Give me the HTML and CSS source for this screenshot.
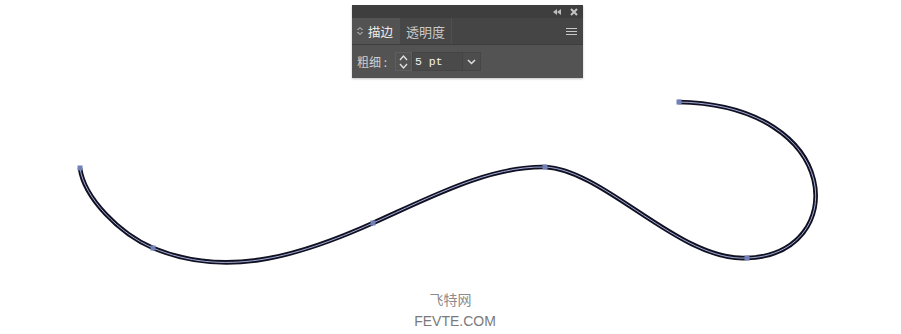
FILE: index.html
```html
<!DOCTYPE html>
<html>
<head>
<meta charset="utf-8">
<link rel="stylesheet" href="styles.css">
</head>
<body>
<div class="canvas">
  <svg class="art" width="901" height="334" viewBox="0 0 901 334">
    <path class="stroke-outer" d="M80,168 C84,198 120,234 153,248 C223,277 293,259 373,223 C433,196 490,166 545,167 C605,170 680,262 747,258 C850,255 845,105 678,102"/>
    <path class="stroke-inner" d="M80,168 C84,198 120,234 153,248 C223,277 293,259 373,223 C433,196 490,166 545,167 C605,170 680,262 747,258 C850,255 845,105 678,102"/>
    <g class="anchors">
      <rect x="77.5" y="165.5" width="5" height="5"/>
      <rect x="150.5" y="245.5" width="5" height="5"/>
      <rect x="370.5" y="220.5" width="5" height="5"/>
      <rect x="542.5" y="164.5" width="5" height="5"/>
      <rect x="744.5" y="255.5" width="5" height="5"/>
      <rect x="676.5" y="99.5" width="5" height="5"/>
    </g>
  </svg>

  <div class="panel">
    <div class="titlebar">
      <svg class="tb-icon" width="8" height="6" viewBox="0 0 8 6"><path d="M4 0 L0 3 L4 6 Z M8 0 L4 3 L8 6 Z" fill="#bdbdbd"/></svg>
      <svg class="tb-icon" width="8" height="8" viewBox="0 0 8 8"><path d="M1 1 L7 7 M7 1 L1 7" stroke="#c4c4c4" stroke-width="2"/></svg>
    </div>
    <div class="tabrow">
      <div class="tab active">
        <svg width="6" height="10" viewBox="0 0 6 10"><path d="M0.5 4 L3 1.5 L5.5 4 M0.5 6 L3 8.5 L5.5 6" fill="none" stroke="#d8d8d8" stroke-width="1"/></svg>
        <span>描边</span>
      </div>
      <div class="tab">透明度</div>
      <div class="tab-fill">
        <svg width="11" height="7" viewBox="0 0 11 7"><path d="M0 0.5 H11 M0 3.5 H11 M0 6.5 H11" stroke="#c8c8c8" stroke-width="1"/></svg>
      </div>
    </div>
    <div class="body">
      <span class="label">粗细 :</span>
      <div class="field">
        <div class="spin">
          <svg width="9" height="16" viewBox="0 0 9 16"><path d="M1 6 L4.5 2 L8 6 M1 10 L4.5 14 L8 10" fill="none" stroke="#e0e0e0" stroke-width="1.4"/></svg>
        </div>
        <div class="input">5 pt</div>
        <div class="drop">
          <svg width="9" height="6" viewBox="0 0 9 6"><path d="M1 1 L4.5 4.5 L8 1" fill="none" stroke="#e0e0e0" stroke-width="1.5"/></svg>
        </div>
      </div>
    </div>
  </div>

  <div class="watermark">
    <div class="wm-cn">飞特网</div>
    <div class="wm-en">FEVTE.COM</div>
  </div>
</div>
</body>
</html>
```

FILE: styles.css
```css
html, body {
  margin: 0;
  padding: 0;
  background: #ffffff;
}
.canvas {
  position: relative;
  width: 901px;
  height: 334px;
  overflow: hidden;
  background: #ffffff;
}
.art {
  position: absolute;
  left: 0;
  top: 0;
}
.stroke-outer {
  fill: none;
  stroke: #111122;
  stroke-width: 4.6;
  stroke-linecap: butt;
}
.stroke-inner {
  fill: none;
  stroke: #b4c0ee;
  stroke-width: 0.9;
}
.anchors rect {
  fill: #7181b8;
}
.panel {
  position: absolute;
  left: 352px;
  top: 5px;
  width: 231px;
  height: 73px;
  background: #535353;
  display: flex;
  flex-direction: column;
  box-shadow: 0 1px 2px rgba(0,0,0,0.25);
  font-family: "Noto Sans CJK SC", "Noto Sans", sans-serif;
}
.titlebar {
  height: 13px;
  background: #3e3e3e;
  display: flex;
  align-items: center;
  justify-content: flex-end;
  gap: 9px;
  padding-right: 5px;
}
.tabrow {
  height: 26px;
  display: flex;
  background: #454545;
  border-bottom: 1px solid #3d3d3d;
}
.tab {
  width: 52px;
  display: flex;
  align-items: center;
  justify-content: center;
  font-size: 13px;
  color: #c9c9c9;
  background: #474747;
  border-right: 1px solid #4f4f4f;
  box-sizing: border-box;
}
.tab.active {
  width: 48px;
  background: #535353;
  color: #eeeeee;
  gap: 5px;
  justify-content: flex-start;
  padding-left: 5px;
  font-size: 12.5px;
  border-right: none;
}
.tab-fill {
  flex: 1;
  display: flex;
  align-items: center;
  justify-content: flex-end;
  padding-right: 6px;
}
.body {
  flex: 1;
  display: flex;
  align-items: center;
  padding-left: 5px;
  gap: 2px;
}
.label {
  font-size: 12px;
  color: #cfcfcf;
  width: 36px;
  white-space: nowrap;
}
.field {
  display: flex;
  height: 19px;
}
.spin {
  width: 17px;
  display: flex;
  align-items: center;
  justify-content: center;
  border: 1px solid #5f5f5f;
  box-sizing: border-box;
}
.input {
  width: 51px;
  background: #4a4a4a;
  border: 1px solid #444;
  box-sizing: border-box;
  color: #f2f2f2;
  font-family: "Liberation Mono", monospace;
  font-size: 11.5px;
  line-height: 17px;
  padding-left: 2px;
}
.drop {
  width: 18px;
  display: flex;
  align-items: center;
  justify-content: center;
  background: #4d4d4d;
  border: 1px solid #464646;
  border-left: none;
  box-sizing: border-box;
}
.watermark {
  position: absolute;
  left: 405px;
  top: 289px;
  width: 100px;
  text-align: center;
}
.wm-cn {
  font-family: "Noto Sans CJK SC", sans-serif;
  font-size: 14px;
  line-height: 20px;
  color: #8c8c8c;
  padding-right: 9px;
}
.wm-en {
  font-family: "Liberation Sans", sans-serif;
  font-size: 14px;
  line-height: 20px;
  margin-top: 2px;
  color: #7a7a7a;
}
```
